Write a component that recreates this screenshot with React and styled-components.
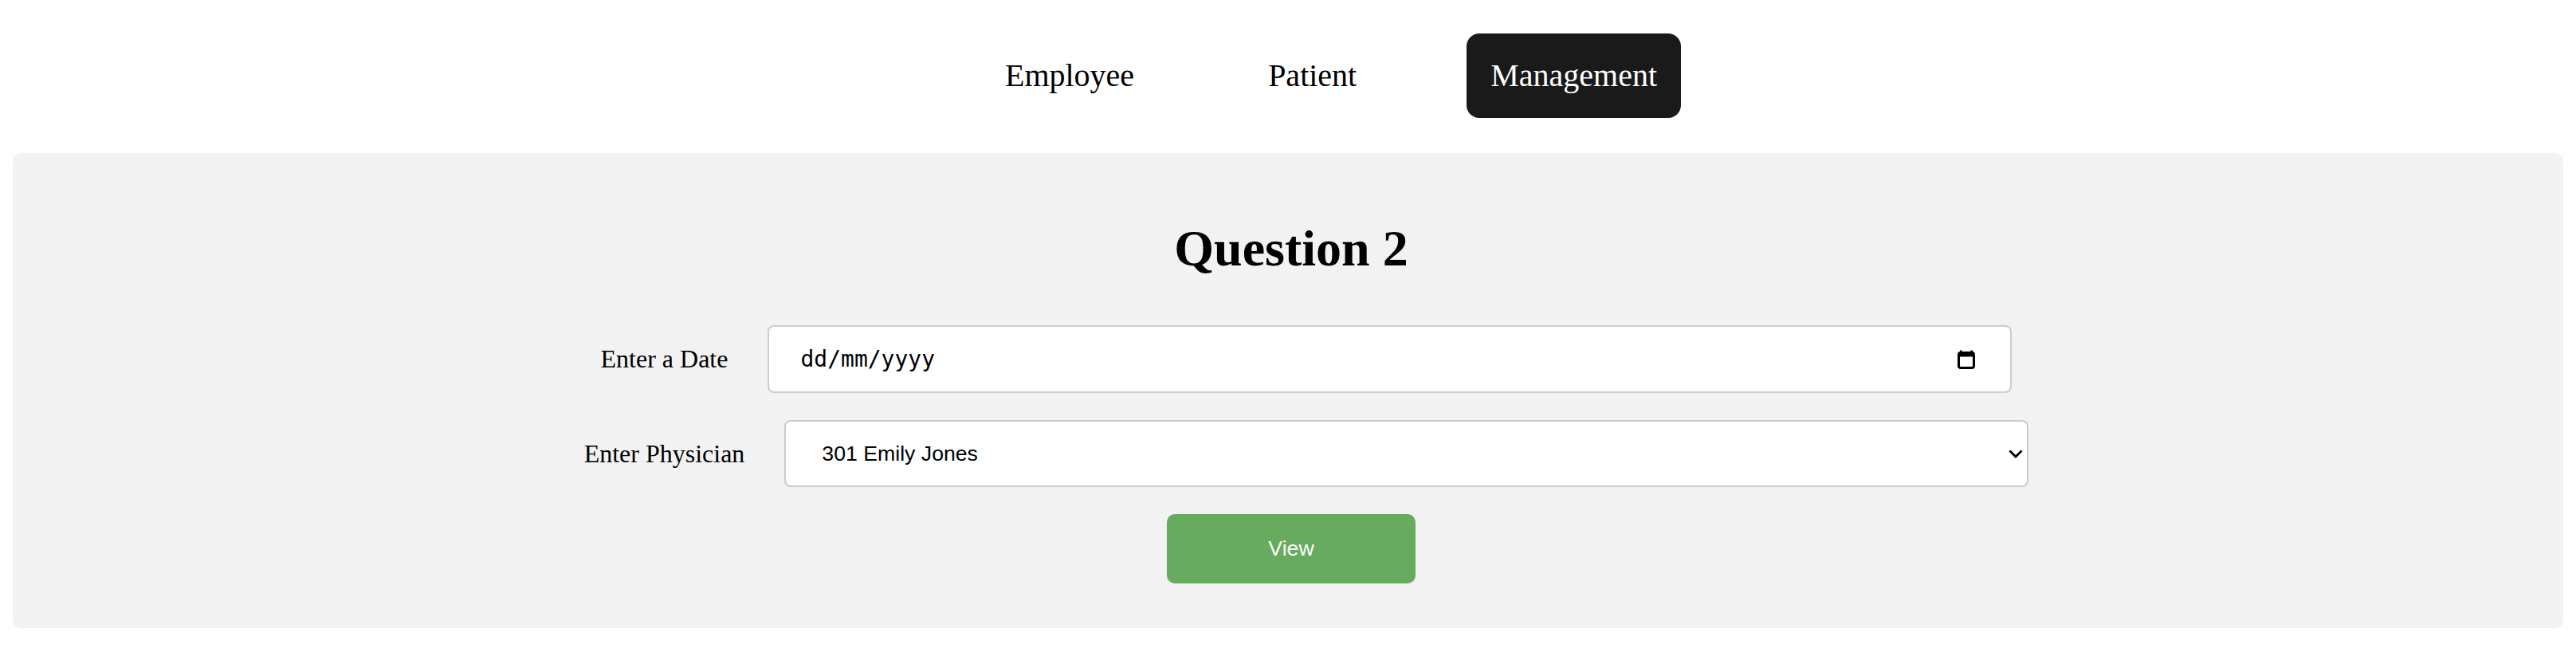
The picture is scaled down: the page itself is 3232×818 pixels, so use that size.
import React from "react";
import styled, { createGlobalStyle } from "styled-components";

const GlobalStyle = createGlobalStyle`
  html, body {
    margin: 0;
    padding: 0;
    background: #ffffff;
  }
  body {
    font-family: "Liberation Serif", "Times New Roman", serif;
    color: #000000;
  }
  * { box-sizing: border-box; }
`;

const Page = styled.div`
  padding: 16px;
`;

const Nav = styled.nav`
  display: flex;
  justify-content: center;
  align-items: center;
  gap: 108px;
  padding: 26px 0 0 108px;
  margin-bottom: 44px;
`;

const NavButton = styled.button`
  font-family: "Liberation Serif", "Times New Roman", serif;
  font-size: 40px;
  line-height: 46px;
  padding: 30px;
  border: none;
  border-radius: 16px;
  cursor: pointer;
  background: ${(p) => (p.$active ? "#1a1a1a" : "transparent")};
  color: ${(p) => (p.$active ? "#ffffff" : "#000000")};
`;

const Panel = styled.section`
  background: #f2f2f2;
  border-radius: 10px;
  padding: 40px 36px 56px 44px;
  display: flex;
  flex-direction: column;
  align-items: center;
`;

const Title = styled.h1`
  font-family: "Liberation Serif", "Times New Roman", serif;
  font-size: 64px;
  font-weight: bold;
  line-height: 74px;
  margin: 43px 0 59px;
  text-align: center;
`;

const Form = styled.form`
  display: flex;
  flex-direction: column;
  align-items: center;
  gap: 34px;
  width: 100%;
`;

const Row = styled.div`
  display: flex;
  align-items: center;
  justify-content: center;
  gap: 50px;
  padding-left: 38px;
`;

const Label = styled.label`
  font-family: "Liberation Serif", "Times New Roman", serif;
  font-size: 32px;
  line-height: 37px;
  white-space: nowrap;
`;

const Field = styled.div`
  display: flex;
  align-items: center;
  width: 1561px;
  height: ${(p) => p.$height}px;
  background: #ffffff;
  border: 2px solid #cccccc;
  border-radius: 8px;
  padding-right: ${(p) => p.$padRight}px;
`;

const DateText = styled.input`
  flex: 1;
  height: 100%;
  border: none;
  outline: none;
  background: transparent;
  padding: 0 0 0 39px;
  font-family: "DejaVu Sans Mono", "Liberation Mono", monospace;
  font-size: 28px;
  color: #000000;
`;

const Select = styled.select`
  flex: 1;
  height: 100%;
  border: none;
  outline: none;
  background: transparent;
  appearance: none;
  -webkit-appearance: none;
  padding: 0 0 0 45px;
  font-family: "Liberation Sans", Arial, sans-serif;
  font-size: 26.67px;
  color: #000000;
`;

const ViewButton = styled.button`
  width: 312px;
  height: 87px;
  border: none;
  border-radius: 10px;
  background: #67ab5e;
  color: #ffffff;
  font-family: "Liberation Sans", Arial, sans-serif;
  font-size: 26.67px;
  cursor: pointer;
`;

const CalendarIcon = () => (
  <svg width="22" height="24" viewBox="0 0 22 24" aria-hidden="true">
    <rect x="1.5" y="3.5" width="19" height="19" rx="2.5" fill="none" stroke="#000" strokeWidth="3" />
    <rect x="1.5" y="3.5" width="19" height="5" fill="#000" />
    <rect x="3" y="0.5" width="2.5" height="4" fill="#000" />
    <rect x="16.5" y="0.5" width="2.5" height="4" fill="#000" />
  </svg>
);

const Chevron = () => (
  <svg width="18" height="11" viewBox="0 0 18 11" aria-hidden="true">
    <path d="M1.5 1.5 L9 9 L16.5 1.5" fill="none" stroke="#000" strokeWidth="2.8" />
  </svg>
);

export default function App() {
  return (
    <>
      <GlobalStyle />
      <Page>
        <Nav>
          <NavButton>Employee</NavButton>
          <NavButton>Patient</NavButton>
          <NavButton $active>Management</NavButton>
        </Nav>
        <Panel>
          <Title>Question 2</Title>
          <Form onSubmit={(e) => e.preventDefault()}>
            <Row>
              <Label htmlFor="date">Enter a Date</Label>
              <Field $height={85} $padRight={44}>
                <DateText id="date" type="text" defaultValue="dd/mm/yyyy" readOnly />
                <CalendarIcon />
              </Field>
            </Row>
            <Row>
              <Label htmlFor="physician">Enter Physician</Label>
              <Field $height={84} $padRight={5}>
                <Select id="physician" defaultValue="301">
                  <option value="301">301 Emily Jones</option>
                </Select>
                <Chevron />
              </Field>
            </Row>
            <ViewButton type="submit">View</ViewButton>
          </Form>
        </Panel>
      </Page>
    </>
  );
}
